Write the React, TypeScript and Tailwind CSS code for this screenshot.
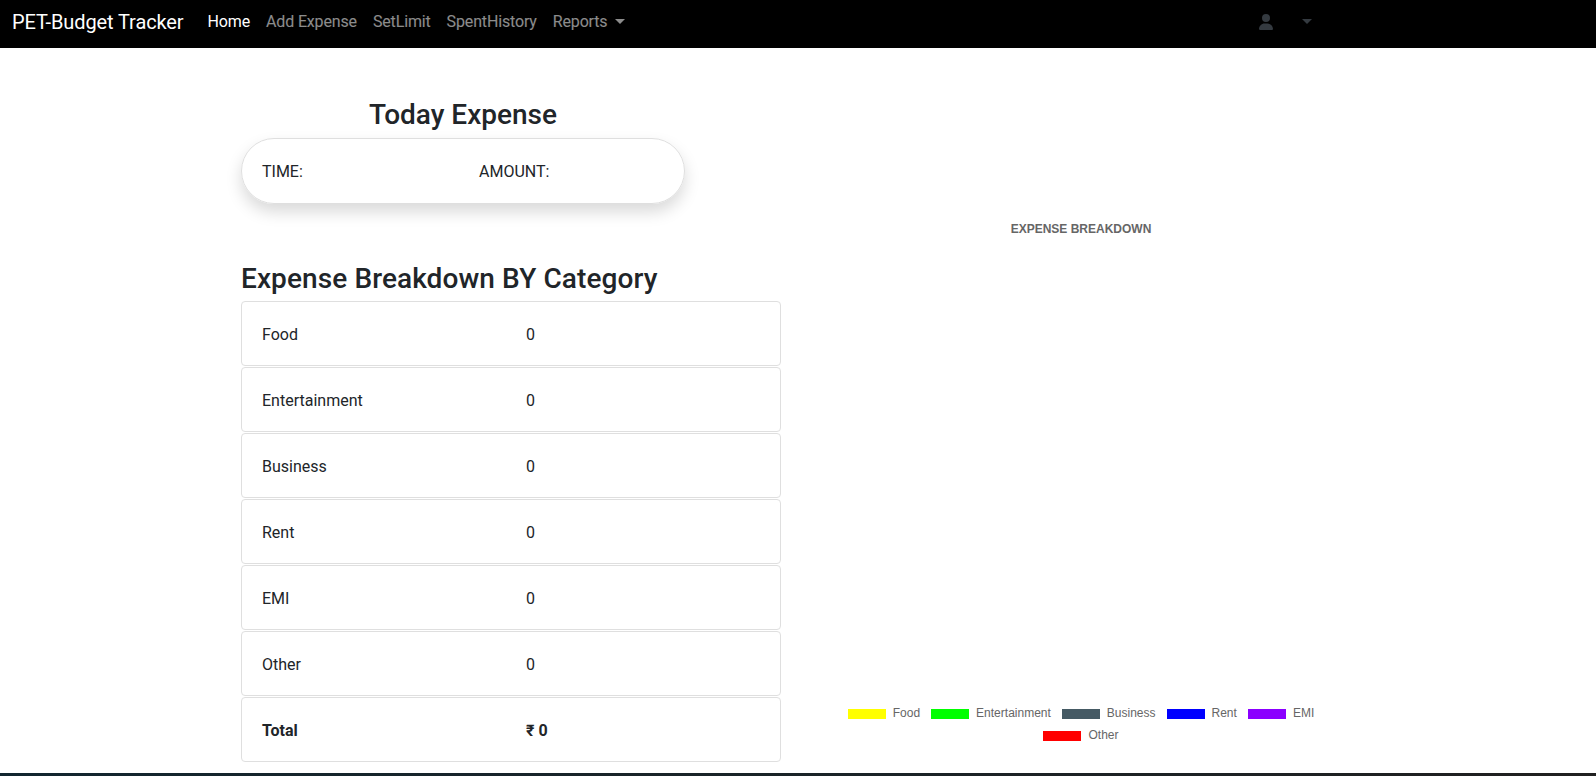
const categories = ['Food', 'Entertainment', 'Business', 'Rent', 'EMI', 'Other'];

const legendItems = [
  { label: 'Food', color: 'bg-[#ffff00]' },
  { label: 'Entertainment', color: 'bg-[#00ff00]' },
  { label: 'Business', color: 'bg-[#455a64]' },
  { label: 'Rent', color: 'bg-[#0000ff]' },
  { label: 'EMI', color: 'bg-[#8b00ff]' },
  { label: 'Other', color: 'bg-[#ff0000]' },
];

const navLinks = ['Add Expense', 'SetLimit', 'SpentHistory'];

const Caret = ({ className }: { className: string }) => (
  <span className={`inline-block w-0 h-0 border-x-[5px] border-x-transparent border-t-[5px] ${className}`} />
);

const LegendItem = ({ label, color }: { label: string; color: string }) => (
  <div className="flex items-center gap-[7px]">
    <span className={`w-[38px] h-[10px] mt-[2px] ${color}`} />
    <span>{label}</span>
  </div>
);

const App = () => {
  return (
    <div className="h-[776px] overflow-hidden flex flex-col bg-white font-['Roboto',sans-serif] text-[#212529]">
      <nav className="h-[48px] shrink-0 bg-black flex items-center pl-3 pr-[284px] pb-[5px] text-[16px] tracking-[-0.15px]">
        <span className="text-[20px] tracking-[-0.1px] text-white mr-[24px]">PET-Budget Tracker</span>
        <span className="text-white">Home</span>
        {navLinks.map((link) => (
          <span key={link} className="ml-4 text-white/55">{link}</span>
        ))}
        <span className="ml-4 text-white/55 flex items-center gap-2">
          Reports <Caret className="border-t-white/55" />
        </span>
        <div className="ml-auto flex items-center gap-[28px]">
          <svg width="16" height="16" viewBox="0 0 448 512" fill="#343a40">
            <path d="M224 256A128 128 0 1 0 224 0a128 128 0 1 0 0 256zm-45.700 48C79.800 304 0 383.800 0 482.300 0 498.700 13.300 512 29.700 512h388.600c16.400 0 29.700-13.300 29.700-29.700C448 383.800 368.200 304 269.700 304h-91.400z" />
          </svg>
          <Caret className="border-t-[#343a40]" />
        </div>
      </nav>

      <main className="flex-1 flex pl-[241px]">
        <section className="w-[540px] shrink-0">
          <div className="w-[444px] pt-[50px]">
            <h3 className="text-[28px] leading-[34px] font-medium text-center">Today Expense</h3>
            <div className="mt-[6px] h-[66px] rounded-[33px] border border-[#dfdfdf] shadow-[0_8px_16px_rgba(0,0,0,0.15)] flex items-center px-[20px] pt-[2px]">
              <span className="w-[217px]">TIME:</span>
              <span>AMOUNT:</span>
            </div>
          </div>
          <h3 className="mt-[58px] text-[28px] leading-[34px] font-medium tracking-[0.1px]">Expense Breakdown BY Category</h3>
          <div className="mt-[5px] flex flex-col gap-[1px]">
            {categories.map((name) => (
              <div key={name} className="h-[65px] rounded border border-[#dfdfdf] flex items-center px-[20px] pt-[2px]">
                <span className="w-[264px]">{name}</span>
                <span>0</span>
              </div>
            ))}
            <div className="h-[65px] rounded border border-[#dfdfdf] flex items-center px-[20px] pt-[2px] font-bold">
              <span className="w-[264px]">Total</span>
              <span>₹ 0</span>
            </div>
          </div>
        </section>

        <section className="w-[580px] ml-[10px] flex flex-col items-center font-['Liberation_Sans',sans-serif] text-[12px] text-[#666666]">
          <p className="mt-[172px] font-bold">EXPENSE BREAKDOWN</p>
          <div className="mt-[466px] w-[480px] flex flex-wrap justify-center gap-x-[11px] gap-y-[4px]">
            {legendItems.map((item) => (
              <LegendItem key={item.label} label={item.label} color={item.color} />
            ))}
          </div>
        </section>
      </main>

      <div className="h-[3px] shrink-0 bg-linear-to-r from-[#12262f] to-[#202020]" />
    </div>
  );
};

export default App;
